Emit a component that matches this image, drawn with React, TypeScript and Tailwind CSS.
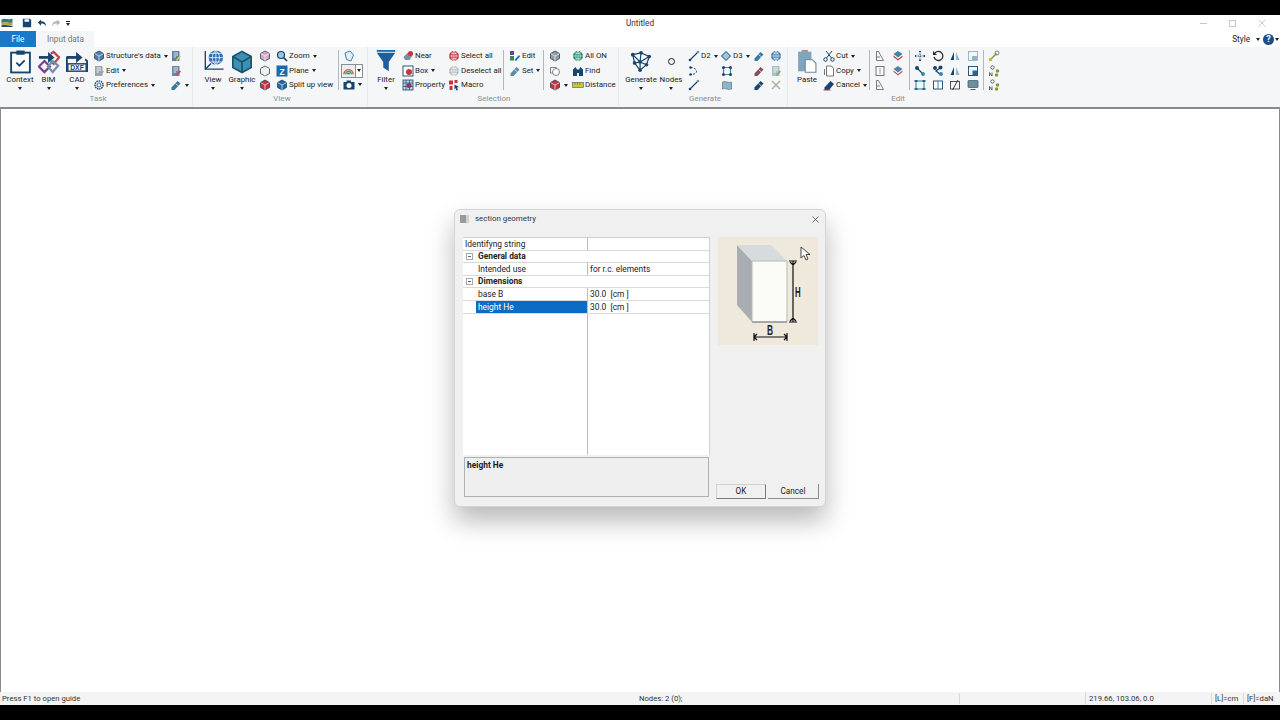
import type { ReactNode } from "react";

const NAVY = "#17456f";
const TEAL = "#3a87a8";
const RED = "#c8323c";

const Svg = ({ s = 12, children }: { s?: number; children: ReactNode }) => (
  <svg width={s} height={s} viewBox="0 0 24 24" fill="none" className="shrink-0">
    {children}
  </svg>
);

const Caret = ({ className = "" }: { className?: string }) => (
  <span className={`inline-block w-0 h-0 border-x-[2.5px] border-x-transparent border-t-[3px] border-t-[#222] ${className}`} />
);

const Large = ({ w, label, icon, caret = true }: { w: number; label: string; icon: ReactNode; caret?: boolean }) => (
  <div className="flex flex-col items-center shrink-0 pt-[2px]" style={{ width: w }}>
    <div className="h-[25px] flex items-center justify-center">{icon}</div>
    <span className="text-[7.9px] leading-[11px] whitespace-nowrap text-[#222]">{label}</span>
    {caret && <Caret className="mt-[2px]" />}
  </div>
);

const Small = ({ icon, label, caret }: { icon: ReactNode; label?: string; caret?: boolean }) => (
  <div className="h-[14.5px] flex items-center gap-[1px] whitespace-nowrap">
    {icon}
    {label && <span className="text-[7.9px] text-[#222]">{label}</span>}
    {caret && <Caret className="ml-[2px]" />}
  </div>
);

const Col = ({ w, children }: { w: number; children: ReactNode }) => (
  <div className="flex flex-col shrink-0 pt-[2px]" style={{ width: w }}>
    {children}
  </div>
);

const Sep = () => <div className="w-px h-[40px] mt-[3px] bg-[#b4b8bc] shrink-0" />;

const Group = ({ w, label, labelX, children, pl = 0, last }: { w: number; label: string; labelX: number; children: ReactNode; pl?: number; last?: boolean }) => (
  <div className={`relative shrink-0 h-[59px] ${last ? "" : "border-r border-[#e6e8ea]"}`} style={{ width: w, paddingLeft: pl }}>
    <div className="flex">{children}</div>
    <span className="absolute bottom-[2px] text-[8px] leading-[10px] text-[#8a8f94] -translate-x-1/2" style={{ left: labelX }}>
      {label}
    </span>
  </div>
);

// small glyphs
const Cube = ({ c = TEAL, s = 12 }: { c?: string; s?: number }) => (
  <Svg s={s}>
    <path d="M12 2l9 5v10l-9 5-9-5V7z" fill={c} stroke="#1d3c50" strokeWidth="1.5" />
    <path d="M3 7l9 5 9-5M12 12v10" stroke="#fff" strokeWidth="1.3" />
  </Svg>
);
const Globe = ({ c = "#1c8a6b", s = 12 }: { c?: string; s?: number }) => (
  <Svg s={s}>
    <circle cx="12" cy="12" r="10" fill={c} />
    <path d="M2 12h20M12 2v20M5 5c4 3 10 3 14 0M5 19c4-3 10-3 14 0M12 2c-6 6-6 14 0 20M12 2c6 6 6 14 0 20" stroke="#fff" strokeWidth="1.1" />
  </Svg>
);
const Line = ({ c = NAVY }: { c?: string }) => (
  <Svg>
    <path d="M4 20L20 4" stroke={c} strokeWidth="2.2" />
    <circle cx="4" cy="20" r="2.6" fill={c} />
    <circle cx="20" cy="4" r="2.6" fill="#7f8f9f" />
  </Svg>
);
const Sheet = ({ c = "#5f7f9f", d = "#d8c860" }: { c?: string; d?: string }) => (
  <Svg>
    <rect x="4" y="2" width="15" height="20" fill={c} />
    <path d="M7 6h9M7 10h9M7 14h5" stroke="#fff" strokeWidth="1.6" />
    <path d="M14 22l8-9-3-2-7 9z" fill={d} />
  </Svg>
);
const Doc = ({ tri }: { tri?: boolean }) => (
  <Svg>
    {tri ? (
      <path d="M5 21V3h4l10 18zM5 14h7" stroke="#555" strokeWidth="1.5" fill="#f8f8f8" />
    ) : (
      <rect x="4" y="3" width="16" height="18" stroke="#555" strokeWidth="1.6" fill="#f8f8f8" />
    )}
    {!tri && <path d="M12 6v12" stroke="#777" strokeWidth="1.4" />}
  </Svg>
);
const Nodes = ({ c = TEAL }: { c?: string }) => (
  <Svg>
    <path d="M5 5h14v14H5z" stroke={c} strokeWidth="2.4" />
    <circle cx="5" cy="5" r="3" fill={NAVY} />
    <circle cx="19" cy="5" r="3" fill={NAVY} />
    <circle cx="5" cy="19" r="3" fill={NAVY} />
    <circle cx="19" cy="19" r="3" fill={NAVY} />
  </Svg>
);
const Blob = ({ a = TEAL, b = RED }: { a?: string; b?: string }) => (
  <Svg>
    <path d="M3 8l9-6 9 6-9 7z" fill={a} />
    <path d="M3 14l9 7 9-7v-3l-9 7-9-7z" fill={b} />
  </Svg>
);
const Pin = ({ c = NAVY }: { c?: string }) => (
  <Svg>
    <path d="M3 17L15 4l6 5L9 22H3z" fill={c} />
    <path d="M11 9l6 5" stroke="#fff" strokeWidth="1.4" />
  </Svg>
);
const Mirror = ({ c = NAVY }: { c?: string }) => (
  <Svg>
    <path d="M10 4v16H3z" fill={c} />
    <path d="M14 4v16h7z" fill="#8fb4c8" />
  </Svg>
);
const Link = ({ flip }: { flip?: boolean }) => (
  <Svg>
    <path d={flip ? "M16 6L8 12l8 6" : "M6 6l12 12"} stroke={NAVY} strokeWidth="2.6" />
    <circle cx="6" cy="6" r="4" fill={NAVY} />
    <circle cx="18" cy="18" r="4" fill={TEAL} />
    {flip && <circle cx="17" cy="5" r="4" fill={NAVY} />}
  </Svg>
);
const NodeTree = () => (
  <Svg>
    <circle cx="9" cy="5" r="3.4" stroke="#444" strokeWidth="1.5" />
    <circle cx="19" cy="12" r="3.6" fill="#7f9a3a" />
    <circle cx="17" cy="20" r="3.4" fill="#7f9a3a" />
    <path d="M3 22v-7l5 7v-7" stroke="#444" strokeWidth="1.6" />
  </Svg>
);

const ContextIcon = (
  <Svg s={25}>
    <rect x="3" y="3.5" width="18" height="19" fill="#fff" stroke={NAVY} strokeWidth="1.8" />
    <rect x="8" y="1.5" width="8" height="4" fill={NAVY} />
    <path d="M8 13l3 3 5-5" stroke={NAVY} strokeWidth="1.7" />
  </Svg>
);
const BimIcon = (
  <svg width="22" height="24" viewBox="0 0 24 24" fill="none" className="shrink-0">
    <path d="M14 3l3-2 6 6-6 7-3-3" stroke="#c0424a" strokeWidth="2.4" />
    <path d="M1 7h13" stroke={NAVY} strokeWidth="3" />
    <path d="M11 1l7 6-7 6z" fill={NAVY} />
    <path d="M7 11l6 6-6 6-6-6z" stroke="#7a3e8f" strokeWidth="2.4" />
    <path d="M16 11l6 5-6 7-5-6z" stroke="#6f8fb0" strokeWidth="2.4" />
  </svg>
);
const DxfIcon = (
  <svg width="22" height="24" viewBox="0 0 24 24" fill="none" className="shrink-0">
    <path d="M1 23V7h8M21 9l2 2v12" stroke={NAVY} strokeWidth="2" />
    <path d="M1 7h12" stroke={NAVY} strokeWidth="3" />
    <path d="M11 1l7 6-7 6z" fill={NAVY} />
    <rect x="2" y="14" width="20" height="8" fill="#fff" stroke={NAVY} strokeWidth="1.6" />
    <text x="12" y="21" textAnchor="middle" fontSize="7.5" fontWeight="700" fill={NAVY} fontFamily="Liberation Sans, sans-serif">DXF</text>
  </svg>
);
const ViewIcon = (
  <svg width="24" height="25" viewBox="0 0 24 26" fill="none" className="shrink-0">
    <path d="M4 2v19h19" stroke={NAVY} strokeWidth="1.4" />
    <path d="M4 21l6-6" stroke={NAVY} strokeWidth="1.4" />
    <circle cx="15" cy="9" r="7.5" fill="#2f6fb0" />
    <path d="M7.5 9h15M15 1.5v15M9 4.5h12M9 13.5h12M15 1.5c-5 4-5 11 0 15M15 1.5c5 4 5 11 0 15" stroke="#fff" strokeWidth="0.8" />
  </svg>
);
const GraphicIcon = (
  <svg width="22" height="24" viewBox="0 0 24 26" fill="none" className="shrink-0">
    <path d="M12 1.5l10 5.5v12l-10 5.5-10-5.5V7z" fill="#3f8fb0" stroke="#17546f" strokeWidth="1.8" />
    <path d="M2 7l10 6 10-6M12 13v11" stroke="#17546f" strokeWidth="1.8" />
  </svg>
);
const FilterIcon = (
  <svg width="20" height="24" viewBox="0 0 20 26" className="shrink-0">
    <rect x="0" y="0" width="20" height="2" fill="#1e6fb0" />
    <path d="M0 3h20l-7 10v10l-6-4v-6z" fill="#1c5f9a" />
  </svg>
);
const GenerateIcon = (
  <svg width="22" height="22" viewBox="0 0 24 24" fill="none" className="shrink-0">
    <path d="M3 4l9-2 9 4-3 9-7 6-6-8zM3 4l8 8 10-6M11 12l7 3M11 12v9M6 13l5-1M12 2l-1 10" stroke={NAVY} strokeWidth="1.3" />
    {[[3, 4], [12, 2], [21, 6], [18, 15], [11, 21], [5, 13], [11, 12]].map(([x, y]) => (
      <circle key={`${x}-${y}`} cx={x} cy={y} r="2" fill={NAVY} />
    ))}
  </svg>
);
const PasteIcon = (
  <svg width="20" height="25" viewBox="0 0 22 28" fill="none" className="shrink-0">
    <path d="M1 3h15v22H1z" fill="#7fa6bd" />
    <rect x="5" y="1" width="7" height="4" fill="#9a9a9a" />
    <path d="M9 12h8l4 4v10H9z" fill="#fff" stroke="#6f8696" strokeWidth="1.2" />
  </svg>
);

const SectionPicture = () => (
  <svg width="100" height="108" viewBox="0 0 100 108" fill="none" className="shrink-0">
    <path d="M19 8v60l15 17V24z" fill="#a8adb2" />
    <path d="M19 8h34l16 16H34z" fill="#d8dbde" />
    <path d="M34 24h35v61H34z" fill="#fbfbf8" stroke="#b8b8b2" strokeWidth="1" />
    <path d="M34 85h35" stroke="#999" strokeWidth="1.5" />
    <path d="M75 24v61M71 24h8M71 85h8M72 25l3 3 3-3M72 84l3-3 3 3" stroke="#111" strokeWidth="1.2" />
    <text transform="translate(77 60) scale(0.65 1.15)" fontSize="12" fontWeight="700" fill="#222" fontFamily="Liberation Sans, sans-serif">H</text>
    <path d="M36 100h33M36 96v8M69 96v8M39 97l-3 3 3 3M66 97l3 3-3 3" stroke="#111" strokeWidth="1.2" />
    <text transform="translate(49 98) scale(0.7 1.15)" fontSize="12" fontWeight="700" fill="#222" fontFamily="Liberation Sans, sans-serif">B</text>
  </svg>
);

const GridRow = ({ label, value, indent = true, selected }: { label: string; value?: string; indent?: boolean; selected?: boolean }) => (
  <div className="h-[12.6px] flex border-b border-[#d9d9d9] text-[8.4px] leading-[12px] text-[#222]">
    <div className={`w-[125px] shrink-0 border-r border-[#bdbdbd] flex ${indent ? "pl-[13px]" : ""}`}>
      <span className={`flex-1 pl-[2px] ${selected ? "bg-[#0a6cc4] text-white" : ""}`}>{label}</span>
    </div>
    <span className="pl-[2px] whitespace-pre">{value}</span>
  </div>
);

const GridSection = ({ label }: { label: string }) => (
  <div className="h-[12.6px] flex items-center border-b border-[#d9d9d9] text-[8.4px] font-bold text-[#222]">
    <span className="w-[13px] flex justify-center">
      <span className="w-[7px] h-[7px] border border-[#aaa] flex items-center justify-center">
        <span className="w-[3px] h-px bg-[#666]" />
      </span>
    </span>
    <span className="pl-[2px]">{label}</span>
  </div>
);

const XMark = ({ s, c }: { s: number; c: string }) => (
  <svg width={s} height={s} viewBox="0 0 8 8" className="shrink-0">
    <path d="M0.5 0.5l7 7M7.5 0.5l-7 7" stroke={c} strokeWidth="0.8" />
  </svg>
);

const App = () => {
  return (
    <div className="w-[1280px] h-[720px] overflow-hidden bg-black flex flex-col text-[#222]" style={{ fontFamily: 'Roboto, sans-serif' }}>
      <div className="h-[15px] shrink-0 bg-black" />

      {/* title bar */}
      <div className="relative h-[16px] shrink-0 bg-white flex items-center pl-[1px] gap-[4px]">
        <Svg s={12}>
          <path d="M1 5c6-4 14 2 22-2v8c-8 3-14-3-22 1z" fill="#2d7f7a" />
          <path d="M1 12c8-4 14 2 22-1v5c-8 3-14-3-22 1z" fill="#c99a3a" />
          <path d="M1 17c8-3 14 2 22 0v3H1z" fill="#1d4a6e" />
        </Svg>
        <span className="ml-[5px]">
          <Svg s={10}>
            <path d="M2 2h17l3 3v17H2z" fill={NAVY} />
            <rect x="6" y="3" width="11" height="6" fill="#fff" />
          </Svg>
        </span>
        <Svg s={11}>
          <path d="M4 10l7-7v4c7 0 11 4 11 11-3-5-6-6-11-6v5z" fill={NAVY} />
        </Svg>
        <Svg s={11}>
          <path d="M20 10l-7-7v4C6 7 2 11 2 18c3-5 6-6 11-6v5z" fill="#a9b5c0" />
        </Svg>
        <span className="flex flex-col items-center gap-[1px]">
          <span className="w-[4px] h-px bg-[#222]" />
          <Caret />
        </span>
        <span className="absolute left-1/2 -translate-x-1/2 text-[8.2px] text-[#333]">Untitled</span>
        <div className="ml-auto flex items-center">
          <span className="w-[7px] h-px bg-[#c8c8c8] mr-[22px]" />
          <span className="w-[7px] h-[7px] border border-[#c8c8c8] mr-[22px]" />
          <span className="mr-[14px]"><XMark s={8} c="#bdbdbd" /></span>
        </div>
      </div>

      {/* tabs */}
      <div className="h-[16px] shrink-0 bg-white flex items-stretch">
        <div className="w-[36px] bg-[#1a78c8] text-white text-[8.2px] flex items-center justify-center">File</div>
        <div className="w-[57px] ml-px bg-[#f4f5f6] text-[#777] text-[8.2px] flex items-center justify-center">Input data</div>
        <div className="ml-auto flex items-center pr-[1px]">
          <span className="text-[8.2px]">Style</span>
          <Caret className="ml-[6px] mr-[3px]" />
          <span className="w-[11px] h-[11px] rounded-full bg-[#174f8a] text-white text-[9px] font-bold leading-none flex items-center justify-center">?</span>
          <Caret className="ml-[1px]" />
        </div>
      </div>

      {/* ribbon */}
      <div className="h-[60px] shrink-0 bg-[#f5f6f7] flex items-start pl-[6px]">
        <Group w={187} label="Task" labelX={92}>
          <Large w={28} label="Context" icon={ContextIcon} />
          <Large w={29} label="BIM" icon={BimIcon} />
          <Large w={28} label="CAD" icon={DxfIcon} />
          <div className="w-[2px]" />
          <Col w={77}>
            <Small icon={<Cube c="#4f7ea8" />} label="Structure's data" caret />
            <Small icon={<Sheet c="#9aa4ae" d="#9aa4ae" />} label="Edit" caret />
            <Small icon={<Svg><circle cx="12" cy="12" r="8" stroke={NAVY} strokeWidth="3" strokeDasharray="3 1.5" /><circle cx="12" cy="12" r="4" stroke={NAVY} strokeWidth="1.5" /></Svg>} label="Preferences" caret />
          </Col>
          <Col w={18}>
            <Small icon={<Sheet />} />
            <Small icon={<Sheet c="#6f86a8" d="#c04b5a" />} />
            <Small icon={<Pin c="#3a7a9c" />} caret />
          </Col>
        </Group>

        <Group w={175} label="View" labelX={89} pl={8}>
          <Large w={24} label="View" icon={ViewIcon} />
          <Large w={34} label="Graphic" icon={GraphicIcon} />
          <Col w={17}>
            <Small icon={<Cube c="#d6a8c8" />} />
            <Small icon={<Cube c="#eeeeee" />} />
            <Small icon={<Cube c={RED} />} />
          </Col>
          <Col w={62}>
            <Small icon={<Svg><circle cx="10" cy="10" r="7" fill="#9cc6e0" stroke={NAVY} strokeWidth="2.4" /><path d="M15 15l7 7" stroke={NAVY} strokeWidth="3.5" /></Svg>} label="Zoom" caret />
            <Small icon={<Svg><rect x="1" y="1" width="22" height="22" fill="#1d69a8" /><text x="12" y="19" textAnchor="middle" fontSize="17" fontWeight="700" fill="#fff" fontFamily="Liberation Sans, sans-serif">Z</text></Svg>} label="Plane" caret />
            <Small icon={<Cube c="#1d69a8" />} label="Split up view" />
          </Col>
          <Sep />
          <Col w={26}>
            <div className="pl-[4px]"><Small icon={<Svg><path d="M4 6l10-4 7 8-5 12-9-3z" fill="#e4eef4" stroke={TEAL} strokeWidth="2" /></Svg>} /></div>
            <div className="pl-[2px] flex items-center">
              <span className="w-[15px] h-[14px] border border-[#8a8f94] bg-[#e8eef2] flex items-center justify-center">
                <Svg s={11}><path d="M2 20a10 10 0 0 1 20 0" stroke="#c85a3a" strokeWidth="3" /><path d="M6 20a6 6 0 0 1 12 0" stroke="#4f9a4a" strokeWidth="3" /><path d="M10 20a2 2 0 0 1 4 0" stroke="#3a6fb0" strokeWidth="3" /></Svg>
              </span>
              <span className="w-[7px] h-[14px] border border-l-0 border-[#8a8f94] bg-white flex items-center justify-center"><Caret /></span>
            </div>
            <div className="pl-[4px]"><Small icon={<Svg><rect x="1" y="6" width="22" height="15" fill={NAVY} /><circle cx="12" cy="13" r="5" fill="#fff" /><rect x="7" y="3" width="9" height="4" fill={NAVY} /></Svg>} caret /></div>
          </Col>
        </Group>

        <Group w={251} label="Selection" labelX={126} pl={8}>
          <Large w={20} label="Filter" icon={FilterIcon} />
          <div className="w-[6px]" />
          <Col w={46}>
            <Small icon={<Svg><path d="M3 14l9-9 9 6-6 9H6z" fill="#7f8f9f" /><circle cx="17" cy="7" r="5" fill={RED} /></Svg>} label="Near" />
            <Small icon={<Svg><rect x="2" y="2" width="20" height="20" fill="#fff" stroke={NAVY} strokeWidth="1.8" /><circle cx="14" cy="14" r="6" fill={RED} /></Svg>} label="Box" caret />
            <Small icon={<Svg><rect x="2" y="2" width="20" height="20" fill="#b8d0e4" stroke={NAVY} strokeWidth="1.6" /><path d="M8 2v20M15 2v20M2 8h20M2 15h20" stroke={NAVY} strokeWidth="1.3" /><circle cx="14" cy="13" r="5" fill="#8a3a5a" /></Svg>} label="Property" />
          </Col>
          <Col w={55}>
            <Small icon={<Globe c={RED} />} label="Select all" />
            <Small icon={<Globe c="#b4b8bc" />} label="Deselect all" />
            <Small icon={<Svg><path d="M2 3h8v8H2zM13 2h6v6h-6zM3 14h6v8H3z" fill={RED} /><path d="M13 11l9 5-4 1 2 5-3 1-2-5-2 3z" fill={NAVY} /></Svg>} label="Macro" />
          </Col>
          <Sep />
          <div className="w-[5px]" />
          <Col w={34}>
            <Small icon={<Svg><rect x="2" y="2" width="8" height="8" fill="#6a3fa0" /><rect x="2" y="12" width="8" height="9" fill="#2f8a5a" /><path d="M11 20l9-10 2 3-8 9z" fill="#1d69a8" /></Svg>} label="Edit" />
            <Small icon={<Pin c="#5a8ca8" />} label="Set" caret />
          </Col>
          <Sep />
          <div className="w-[4px]" />
          <Col w={24}>
            <div className="pl-[1px]"><Small icon={<Cube c="#8f9aa3" />} /></div>
            <div className="pl-[1px]"><Small icon={<Svg><path d="M3 5h12v11H3z" fill="#fff" stroke="#666" strokeWidth="1.6" /><circle cx="14" cy="14" r="7" fill="#fff" stroke="#666" strokeWidth="1.6" /></Svg>} /></div>
            <div className="pl-[1px] flex items-center"><Small icon={<Cube c={RED} />} /><Caret className="ml-[3px]" /></div>
          </Col>
          <Col w={46}>
            <Small icon={<Globe />} label="All ON" />
            <Small icon={<Svg><path d="M2 22V9l5-5 3 5h4l3-5 5 5v13h-8v-6h-4v6z" fill={NAVY} /></Svg>} label="Find" />
            <Small icon={<Svg><rect x="1" y="7" width="22" height="10" fill="#c9c63a" stroke="#555" strokeWidth="1.2" /><path d="M6 7v4M11 7v4M16 7v4" stroke="#555" strokeWidth="1.2" /></Svg>} label="Distance" />
          </Col>
        </Group>

        <Group w={169} label="Generate" labelX={86} pl={5}>
          <Large w={34} label="Generate" icon={GenerateIcon} />
          <Large w={26} label="Nodes" icon={<span className="w-[7px] h-[7px] rounded-full border-[1.5px] border-[#222]" />} />
          <div className="w-[4px]" />
          <Col w={32}>
            <Small icon={<Line />} label="D2" caret />
            <Small icon={<Svg><path d="M5 5c14 0 18 14 0 14" stroke={NAVY} strokeWidth="2" strokeDasharray="4 3" /><circle cx="5" cy="5" r="2.6" fill={NAVY} /><circle cx="5" cy="19" r="2.6" fill={NAVY} /></Svg>} />
            <Small icon={<Line />} />
          </Col>
          <Col w={33}>
            <Small icon={<Svg><path d="M12 3l9 9-9 9-9-9z" fill="#9cc6e0" stroke={NAVY} strokeWidth="2" /></Svg>} label="D3" caret />
            <div className="pl-[1px]"><Small icon={<Nodes />} /></div>
            <div className="pl-[1px]"><Small icon={<Svg><path d="M3 6c6-3 12 3 18 0v14c-6 3-12-3-18 0z" fill="#8fb4c8" stroke="#5a8296" strokeWidth="1.5" /></Svg>} /></div>
          </Col>
          <Col w={17}>
            <Small icon={<Pin c="#3a7aa8" />} />
            <Small icon={<Pin c="#8a4a5a" />} />
            <Small icon={<Pin />} />
          </Col>
          <Col w={16}>
            <Small icon={<Globe c="#3a7aa8" />} />
            <Small icon={<Sheet c="#a8c0c8" d="#8fa85a" />} />
            <Small icon={<Svg><path d="M4 4l16 16M20 4L4 20" stroke="#a8b4a0" strokeWidth="3" /></Svg>} />
          </Col>
        </Group>

        <Group w={224} label="Edit" labelX={110} pl={6} last>
          <Large w={26} label="Paste" icon={PasteIcon} caret={false} />
          <div className="w-[3px]" />
          <Col w={46}>
            <Small icon={<Svg><circle cx="5" cy="19" r="3.5" stroke={NAVY} strokeWidth="2" /><circle cx="19" cy="19" r="3.5" stroke={NAVY} strokeWidth="2" /><path d="M7 16L18 2M17 16L6 2" stroke={NAVY} strokeWidth="2" /></Svg>} label="Cut" caret />
            <Small icon={<Svg><path d="M7 2h10l4 5v15H7z" fill="#fff" stroke="#555" strokeWidth="1.6" /><path d="M3 8v12" stroke="#555" strokeWidth="1.6" /></Svg>} label="Copy" caret />
            <Small icon={<Svg><path d="M3 17L15 4l7 6-10 12H3z" fill={NAVY} /><path d="M1 22h14" stroke={RED} strokeWidth="2" /></Svg>} label="Cancel" caret />
          </Col>
          <Sep />
          <div className="w-[4px]" />
          <Col w={18}><Small icon={<Doc tri />} /><Small icon={<Doc />} /><Small icon={<Doc tri />} /></Col>
          <Col w={17}><Small icon={<Blob />} /><Small icon={<Blob a="#5a7fa0" b="#a85a6a" />} /></Col>
          <Sep />
          <div className="w-[4px]" />
          <Col w={17.5}>
            <Small icon={<Svg><path d="M12 2v20M2 12h20M12 2l-3 3M12 2l3 3M12 22l-3-3M12 22l3-3M2 12l3-3M2 12l3 3M22 12l-3-3M22 12l-3 3" stroke={NAVY} strokeWidth="2" strokeDasharray="3 2" /></Svg>} />
            <Small icon={<Link />} />
            <Small icon={<Svg><rect x="4" y="4" width="16" height="16" stroke={TEAL} strokeWidth="2.2" /><path d="M1 4h6M17 4h6M1 20h6M17 20h6" stroke={NAVY} strokeWidth="3" /></Svg>} />
          </Col>
          <Col w={17.5}>
            <Small icon={<Svg><path d="M6 6a9 9 0 1 1-2 8" stroke="#2d2d2d" strokeWidth="2.6" /><path d="M2 2v8h8z" fill="#2d2d2d" /></Svg>} />
            <Small icon={<Link flip />} />
            <Small icon={<Svg><rect x="3" y="4" width="18" height="16" fill="#fff" stroke={NAVY} strokeWidth="1.8" /><path d="M12 4v16" stroke={TEAL} strokeWidth="2" /></Svg>} />
          </Col>
          <Col w={17.5}>
            <Small icon={<Mirror />} />
            <Small icon={<Mirror />} />
            <Small icon={<Svg><rect x="3" y="5" width="18" height="15" stroke="#444" strokeWidth="1.8" /><path d="M7 22L18 2" stroke="#222" strokeWidth="1.8" /></Svg>} />
          </Col>
          <Col w={12.5}>
            <Small icon={<Svg><rect x="3" y="3" width="18" height="18" stroke="#8fa6b4" strokeWidth="1.6" /><rect x="10" y="12" width="10" height="8" fill="#8fb4c8" /></Svg>} />
            <Small icon={<Svg><rect x="3" y="3" width="18" height="18" stroke={NAVY} strokeWidth="1.8" /><rect x="11" y="11" width="9" height="9" fill="#1d69a8" /></Svg>} />
            <Small icon={<Svg><rect x="2" y="3" width="20" height="14" rx="1" fill="#6f8f9f" stroke="#3f5f6f" strokeWidth="1.5" /><path d="M7 21h10" stroke="#3f5f6f" strokeWidth="2" /></Svg>} />
          </Col>
          <div className="w-[4px]" />
          <Sep />
          <div className="w-[4px]" />
          <Col w={14}>
            <Small icon={<Svg><path d="M5 19L17 7" stroke="#7f9a3a" strokeWidth="3" /><circle cx="5" cy="19" r="3.5" fill="#c9b53a" /><circle cx="18" cy="6" r="4" stroke="#666" strokeWidth="1.6" /></Svg>} />
            <Small icon={<NodeTree />} />
            <Small icon={<NodeTree />} />
          </Col>
        </Group>
      </div>

      {/* canvas */}
      <div className="relative flex-1 min-h-0 bg-white border-t-2 border-l border-r border-[#8a8a8a] flex justify-center items-start pt-[100px]">
        <div className="w-[372px] h-[298px] shrink-0 bg-[#f0f0f0] rounded-[6px] border border-[#d4d4d4] shadow-[0_14px_26px_rgba(0,0,0,0.28)] flex flex-col">
          <div className="h-[18px] shrink-0 flex items-center pl-[5px] pr-[6px]">
            <span className="w-[9px] h-[8px] bg-[#9a9a9a] border-r-[3px] border-[#d0d0d0]" />
            <span className="ml-[6px] text-[7.9px] text-[#333]">section geometry</span>
            <span className="ml-auto"><XMark s={7} c="#333" /></span>
          </div>
          <div className="flex-1 flex pl-[8px] pt-[9px] pr-[7px] gap-[7px]">
            <div className="w-[247px] shrink-0 flex flex-col">
              <div className="h-[218px] bg-white border-t border-r border-[#cfcfcf] flex flex-col relative">
                <GridRow label="Identifyng string" indent={false} />
                <GridSection label="General data" />
                <GridRow label="Intended use" value="for r.c. elements" />
                <GridSection label="Dimensions" />
                <GridRow label="base B" value="30.0  [cm ]" />
                <GridRow label="height He" value="30.0  [cm ]" selected />
                <div className="flex-1 w-[125px] border-r border-[#bdbdbd]" />
              </div>
              <div className="mt-[2px] h-[40px] w-[245px] ml-px border border-[#b0b0b0] bg-[#efefef] pl-[2px] pt-[1px] text-[8.4px] font-bold text-[#222]">height He</div>
            </div>
            <div className="flex-1 flex flex-col items-center min-w-0">
              <div className="bg-[#efe9dc] w-[100px] h-[108px]">
                <SectionPicture />
              </div>
              <div className="mt-auto mb-[7px] flex gap-[2px]">
                <div className="w-[50px] h-[15px] border border-[#7a7a7a] border-t-[#d0d0d0] border-l-[#d0d0d0] bg-[#f0f0f0] text-[8.2px] leading-[13px] text-center">OK</div>
                <div className="w-[51px] h-[15px] border-b border-r border-[#8a8a8a] bg-[#f0f0f0] text-[8.2px] leading-[14px] text-center">Cancel</div>
              </div>
            </div>
          </div>
        </div>
        {/* mouse cursor */}
        <svg width="11" height="15" viewBox="0 0 11 15" className="absolute left-[799px] top-[137px]">
          <path d="M1 1v11l3-2.5 2 4.5 2-1-2-4.5h4z" fill="#fff" stroke="#444" strokeWidth="1" />
        </svg>
      </div>

      {/* status bar */}
      <div className="h-[13px] shrink-0 bg-[#f4f4f4] flex items-center text-[7.7px] text-[#333]">
        <span className="w-[639px] pl-[2px] shrink-0">Press F1 to open guide</span>
        <span className="w-[321px] shrink-0 border-r border-[#d8d8d8]">Nodes: 2 (0);</span>
        <span className="w-[126px] shrink-0 border-r border-[#d8d8d8] h-full" />
        <span className="w-[126px] shrink-0 pl-[3px] border-r border-[#d8d8d8]">219.66, 103.06, 0.0</span>
        <span className="w-[32px] shrink-0 pl-[3px] border-r border-[#d8d8d8]">[L]=cm</span>
        <span className="pl-[3px]">[F]=daN</span>
      </div>
      <div className="h-[15px] shrink-0 bg-black" />
    </div>
  );
};

export default App;
